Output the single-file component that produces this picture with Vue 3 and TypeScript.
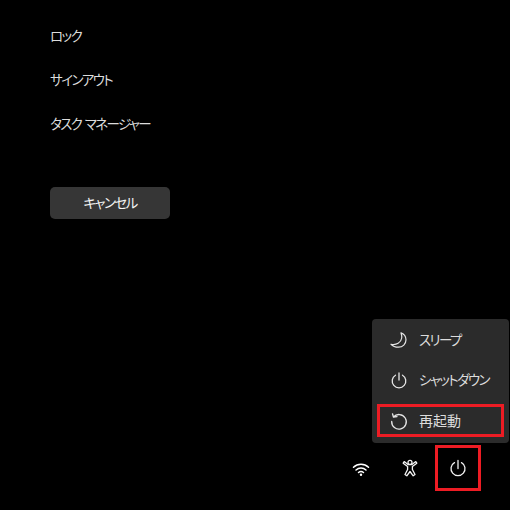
<script setup lang="ts">
const links: string[] = ['ロック', 'サインアウト', 'タスク マネージャー']
</script>

<template>
  <div class="screen">
    <div class="left">
      <div class="link kana" v-for="l in links" :key="l">{{ l }}</div>
      <button class="cancel"><span class="kana">キャンセル</span></button>
    </div>
    <div class="right">
      <div class="menu">
        <div class="item">
          <svg class="ic" viewBox="0 0 20 20" fill="none" stroke="#e6e6e6" stroke-width="1.2" stroke-linejoin="round"><path d="M12 2.800c3 1.300 5 3.900 5 7 0 4.200-3.300 7.400-7.500 7.400-3 0-5.800-1-7.500-2.900 5.500 1 10-1.500 10.700-6.300.3-2-.2-3.600-.7-5.200z"/></svg>
          <span class="kana">スリープ</span>
        </div>
        <div class="item">
          <svg class="ic" viewBox="0 0 20 20" fill="none" stroke="#e6e6e6" stroke-width="1.3" stroke-linecap="round"><path d="M10 3v7M6.500 5.200a6.800 6.800 0 1 0 7 0"/></svg>
          <span class="kana">シャットダウン</span>
        </div>
        <div class="item hl">
          <svg class="ic" viewBox="0 0 20 20" fill="none" stroke="#e6e6e6" stroke-width="1.3" stroke-linecap="round" stroke-linejoin="round"><path d="M4.500 6a7.300 7.300 0 1 1-1.800 4.500M3.500 2.800l1 3.400 3.500-.6"/></svg>
          <span class="kanji">再起動</span>
        </div>
      </div>
      <div class="tray">
        <svg class="tic wifi" viewBox="0 0 20 20" fill="none" stroke="#fff" stroke-width="1.5" stroke-linecap="round"><path d="M2.500 8.200a11 11 0 0 1 15 0M5 11a7.400 7.400 0 0 1 10 0M7.500 13.500a3.800 3.800 0 0 1 5 0"/><circle cx="10" cy="15.800" r="1.200" fill="#fff" stroke="none"/></svg>
        <svg class="tic acc" viewBox="0 0 20 20" fill="none" stroke="#f4f4f4" stroke-width="1.3" stroke-linejoin="round"><circle cx="10" cy="4.400" r="2"/><path d="M4.200 3.600 3.200 5.200 7.600 8.600v2.900L5 16.500l1.800 1.300L10 13.500l3.200 4.300 1.800-1.300-2.600-5V8.600l4.400-3.400-1-1.600L12 6.600H8z"/></svg>
        <div class="powerbox">
          <svg class="tic" viewBox="0 0 20 20" fill="none" stroke="#f0f0f0" stroke-width="1.3" stroke-linecap="round"><path d="M10 2.500v8M6.500 4.600a7 7 0 1 0 7 0"/></svg>
        </div>
      </div>
    </div>
  </div>
</template>

<style>
html, body { margin: 0; background: #000; }
</style>

<style scoped>
.screen {
  width: 510px;
  height: 510px;
  background: #000;
  position: relative;
  overflow: hidden;
  font-family: "Noto Sans CJK JP", "Noto Sans", sans-serif;
  font-feature-settings: "palt";
  color: #dcdcdc;
  font-size: 14px;
  white-space: nowrap;
}
.kana {
  font-size: 13.5px;
  letter-spacing: -1.6px;
  word-spacing: 2px;
}
.left {
  display: flex;
  flex-direction: column;
  align-items: flex-start;
  padding: 14px 0 0 50px;
}
.link {
  height: 44px;
  line-height: 42px;
}
.cancel {
  margin-top: 41px;
  width: 120px;
  height: 32px;
  border: 0;
  border-radius: 5px;
  background: #363636;
  color: #f4f4f4;
  font-family: inherit;
  font-feature-settings: "palt";
  padding: 0 0 2px;
}
.right {
  position: absolute;
  right: 1px;
  top: 319px;
  width: 137px;
  display: flex;
  flex-direction: column;
}
.menu {
  height: 124px;
  background: #2b2b2b;
  border-radius: 4px;
  box-sizing: border-box;
  padding: 1px 5px 0;
  display: flex;
  flex-direction: column;
}
.item {
  height: 40px;
  display: flex;
  align-items: center;
  gap: 9px;
  padding-left: 12px;
  box-sizing: border-box;
}
.item span { padding: 0 0 2px 1px; }
.hl {
  height: 33px;
  margin-top: 4px;
  outline: 3px solid #ed1c24;
  outline-offset: -3px;
}
.ic { width: 20px; height: 20px; flex: none; }
.tray {
  position: relative;
  height: 67px;
}
.tic { width: 20px; height: 20px; display: block; }
.wifi { position: absolute; top: 16px; left: -21px; }
.acc { position: absolute; top: 15px; left: 28px; }
.powerbox {
  position: absolute;
  left: 63px;
  top: 2px;
  width: 46px;
  height: 46px;
  box-sizing: border-box;
  border: 3px solid #ed1c24;
  display: flex;
  align-items: center;
  justify-content: center;
}
</style>
